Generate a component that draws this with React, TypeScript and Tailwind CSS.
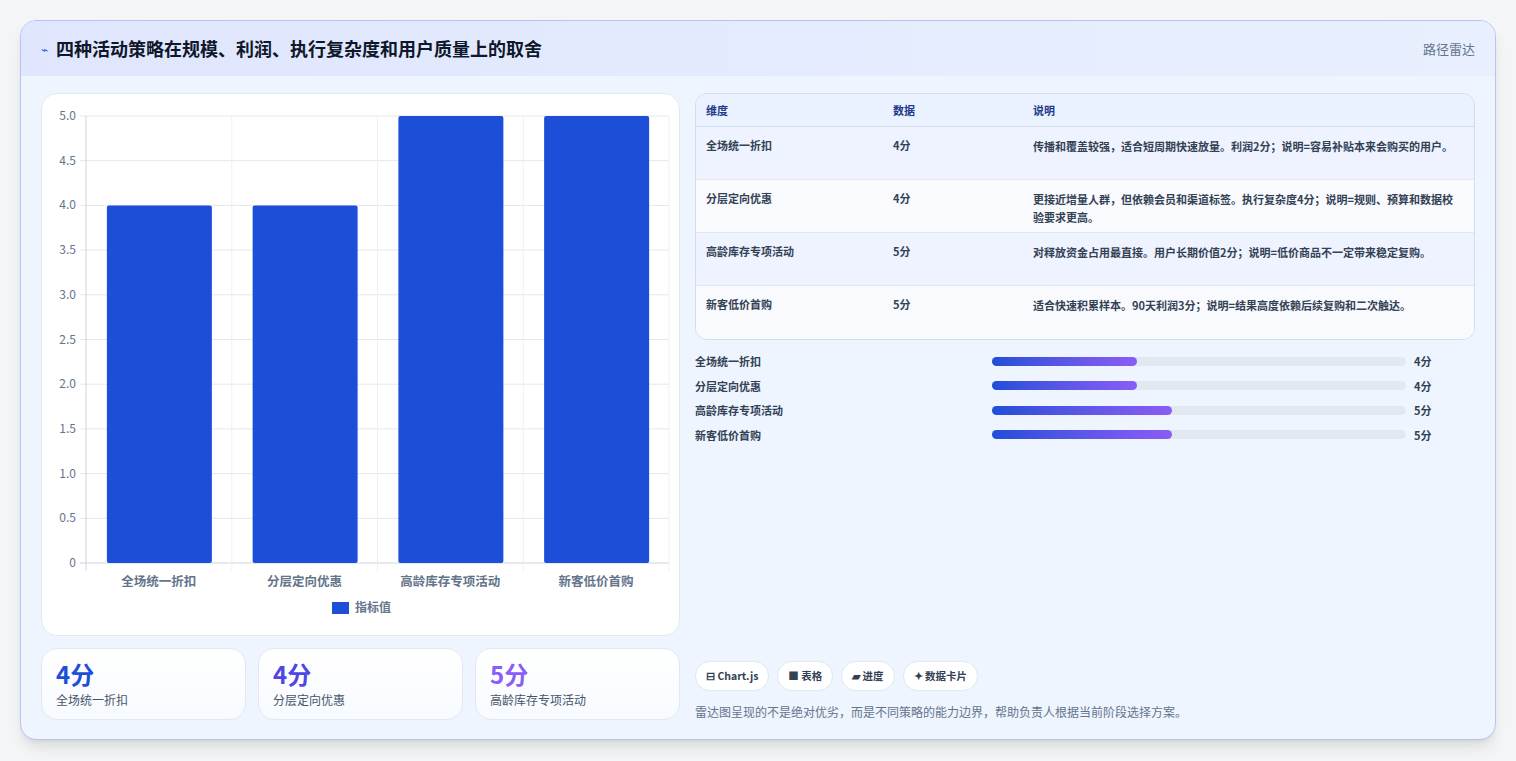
const font = { fontFamily: '"Noto Sans CJK SC", "Noto Sans", sans-serif' }

const rows = [
  { name: '全场统一折扣', v: '4分', d: '传播和覆盖较强，适合短周期快速放量。利润2分；说明=容易补贴本来会购买的用户。' },
  { name: '分层定向优惠', v: '4分', d: '更接近增量人群，但依赖会员和渠道标签。执行复杂度4分；说明=规则、预算和数据校验要求更高。' },
  { name: '高龄库存专项活动', v: '5分', d: '对释放资金占用最直接。用户长期价值2分；说明=低价商品不一定带来稳定复购。' },
  { name: '新客低价首购', v: '5分', d: '适合快速积累样本。90天利润3分；说明=结果高度依赖后续复购和二次触达。' },
]
const vals = [4, 4, 5, 5]

function Chart() {
  const L = 44, T = 22, R = 627, B = 469
  const h = B - T
  const cw = (R - L) / 4
  const ticks = [0, 0.5, 1, 1.5, 2, 2.5, 3, 3.5, 4, 4.5, 5]
  return (
    <svg width="639" height="543" className="block">
      {ticks.map((t) => {
        const y = B - (t / 5) * h
        return (
          <g key={t}>
            <line x1={L - 6} x2={R} y1={y} y2={y} stroke={t === 0 ? '#cbd5e1' : '#e5e7eb'} />
            <text x={L - 10} y={y + 4} textAnchor="end" fontSize="12" fill="#64748b">{t === 0 ? '0' : t.toFixed(1)}</text>
          </g>
        )
      })}
      {[0, 1, 2, 3, 4].map((i) => (
        <line key={i} x1={L + i * cw} x2={L + i * cw} y1={T} y2={B + 8} stroke={i === 0 ? '#cbd5e1' : '#eef0f3'} />
      ))}
      {vals.map((v, i) => {
        const bh = (v / 5) * h
        const x = L + i * cw + cw / 2 - 52
        return <rect key={i} x={x} y={B - bh} width="105" height={bh} rx="2" fill="#1d4ed8" />
      })}
      {rows.map((r, i) => (
        <text key={i} x={L + i * cw + cw / 2} y={492} textAnchor="middle" fontSize="12.5" fontWeight="600" fill="#64748b">{r.name}</text>
      ))}
      <rect x="290" y="508" width="17" height="12" fill="#1d4ed8" />
      <text x="313" y="518" fontSize="12" fontWeight="600" fill="#64748b">指标值</text>
    </svg>
  )
}

export default function App() {
  return (
    <div className="min-h-[761px] bg-[#f4f5f7] px-5 pt-5" style={font}>
      <div className="h-[720px] overflow-hidden rounded-2xl border border-[#b9c3ef] bg-[#eef5ff] shadow-lg">
        <div className="flex h-[55px] items-center justify-between bg-gradient-to-r from-[#dfe6fd] to-[#e8f0ff] px-5">
          <div className="flex items-center gap-2">
            <span className="text-xs text-[#3b5bdb]">⌁</span>
            <h1 className="text-[18px] font-bold text-[#0f172a]">四种活动策略在规模、利润、执行复杂度和用户质量上的取舍</h1>
          </div>
          <span className="text-[13px] text-[#64748b]">路径雷达</span>
        </div>
        <div className="flex gap-[15px] px-5 pt-[17px]">
          <div className="w-[639px] shrink-0">
            <div className="h-[543px] rounded-2xl border border-[#e2e8f0] bg-white">
              <Chart />
            </div>
            <div className="mt-3 grid grid-cols-3 gap-3">
              {[
                ['4分', '全场统一折扣', 'text-[#1d4ed8]'],
                ['4分', '分层定向优惠', 'text-[#4f46e5]'],
                ['5分', '高龄库存专项活动', 'text-[#8b5cf6]'],
              ].map(([v, l, c]) => (
                <div key={l} className="h-[72px] rounded-2xl border border-[#e2e8f0] bg-gradient-to-b from-white to-[#f7faff] px-[14px] pt-[10px]">
                  <div className={`text-[24px] font-bold leading-[30px] ${c}`}>{v}</div>
                  <div className="mt-0.5 text-[12px] text-[#475569]">{l}</div>
                </div>
              ))}
            </div>
          </div>
          <div className="flex h-[628px] flex-1 flex-col">
            <div className="overflow-hidden rounded-xl border border-[#d5dcea] text-[11px] font-semibold">
              <div className="flex h-[33px] items-center border-b border-[#d5dcea] bg-[#eaf1ff] px-[10px] text-[#1e3a8a]">
                <div className="w-[187px]">维度</div>
                <div className="w-[140px]">数据</div>
                <div>说明</div>
              </div>
              {rows.map((r, i) => (
                <div key={r.name} className={`flex h-[53px] border-[#e2e8f0] px-[10px] pt-[10px] text-[#334155] ${i < 3 ? 'border-b' : ''} ${i % 2 === 0 ? 'bg-[#eef3ff]' : 'bg-[#f8fafd]'}`}>
                  <div className="w-[187px] shrink-0">{r.name}</div>
                  <div className="w-[140px] shrink-0">{r.v}</div>
                  <div className="w-[430px] leading-[18px]">{r.d}</div>
                </div>
              ))}
            </div>
            <div className="mt-[12px] flex flex-col gap-[6px]">
              {rows.map((r, i) => (
                <div key={r.name} className="flex h-[18.5px] items-center text-[11px] font-semibold text-[#334155]">
                  <div className="w-[297px]">{r.name}</div>
                  <div className="h-[9px] w-[414px] rounded-full bg-[#e2e8f0]">
                    <div className="h-full rounded-full bg-gradient-to-r from-[#1d4ed8] to-[#8b5cf6]" style={{ width: vals[i] === 4 ? '35%' : '43.5%' }} />
                  </div>
                  <div className="ml-2">{r.v}</div>
                </div>
              ))}
            </div>
            <div className="mt-auto">
              <div className="flex gap-2 text-[10.5px] font-semibold text-[#334155]">
                {['⊟ Chart.js', '■ 表格', '▰ 进度', '✦ 数据卡片'].map((c) => (
                  <span key={c} className="rounded-full border border-[#e2e8f0] bg-white px-[10px] py-[6px]">{c}</span>
                ))}
              </div>
              <p className="mt-[12px] text-[12px] text-[#64748b]">雷达图呈现的不是绝对优劣，而是不同策略的能力边界，帮助负责人根据当前阶段选择方案。</p>
            </div>
          </div>
        </div>
      </div>
    </div>
  )
}
